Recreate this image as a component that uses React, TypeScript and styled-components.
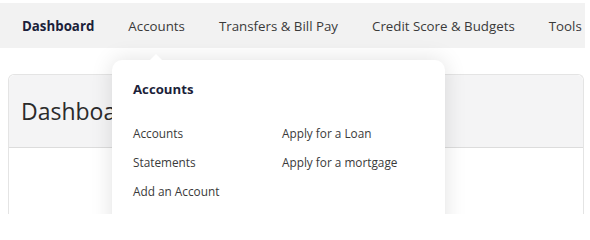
import styled, { createGlobalStyle } from 'styled-components';

const GlobalStyle = createGlobalStyle`
  body {
    margin: 0;
    background: #ffffff;
    font-family: "Open Sans", "Noto Sans", sans-serif;
    color: #333333;
  }
`;

const Page = styled.div`
  position: relative;
  width: 585px;
  height: 211px;
  padding-top: 3px;
  overflow: hidden;
`;

const NavBar = styled.nav`
  display: flex;
  align-items: center;
  height: 45px;
  padding-left: 22px;
  gap: 34px;
  background: #f2f2f2;
`;

const NavItem = styled.a<{ $active?: boolean }>`
  font-size: 13.3px;
  font-weight: ${({ $active }) => ($active ? 700 : 400)};
  color: ${({ $active }) => ($active ? '#1c1f3a' : '#3a3a3a')};
  text-decoration: none;
  white-space: nowrap;
`;

const Card = styled.section`
  margin: 26px 1px 0 8px;
  border: 1px solid #e4e4e4;
  border-bottom: none;
  border-radius: 6px 6px 0 0;
  height: 140px;
`;

const CardHeader = styled.header`
  display: flex;
  align-items: center;
  height: 72px;
  padding-left: 12px;
  background: #f4f4f5;
  border-bottom: 1px solid #dcdcdc;
  border-radius: 6px 6px 0 0;
`;

const Heading = styled.h1`
  margin: 0;
  font-size: 23px;
  font-weight: 400;
  color: #2b2b2b;
`;

const Dropdown = styled.div`
  position: absolute;
  left: 112px;
  top: 60px;
  width: 333px;
  height: 180px;
  padding: 20px 21px;
  box-sizing: border-box;
  background: #ffffff;
  border-radius: 10px 10px 0 0;
  box-shadow: 0 0 22px rgba(0, 0, 0, 0.12);

  &::before {
    content: '';
    position: absolute;
    left: 37px;
    top: -6px;
    border-left: 7px solid transparent;
    border-right: 7px solid transparent;
    border-bottom: 7px solid #ffffff;
  }
`;

const MenuTitle = styled.h2`
  margin: 0 0 26px;
  font-size: 13.2px;
  font-weight: 700;
  color: #1c1f3a;
`;

const MenuGrid = styled.div`
  display: grid;
  grid-template-columns: 149px 1fr;
  row-gap: 11px;
`;

const MenuLink = styled.a`
  font-size: 11.8px;
  line-height: 18px;
  color: #3a3a3a;
  text-decoration: none;
`;

export default function App() {
  return (
    <>
      <GlobalStyle />
      <Page>
        <NavBar>
          <NavItem $active>Dashboard</NavItem>
          <NavItem>Accounts</NavItem>
          <NavItem>Transfers &amp; Bill Pay</NavItem>
          <NavItem>Credit Score &amp; Budgets</NavItem>
          <NavItem>Tools</NavItem>
        </NavBar>
        <Card>
          <CardHeader>
            <Heading>Dashboard</Heading>
          </CardHeader>
        </Card>
        <Dropdown>
          <MenuTitle>Accounts</MenuTitle>
          <MenuGrid>
            <MenuLink>Accounts</MenuLink>
            <MenuLink>Apply for a Loan</MenuLink>
            <MenuLink>Statements</MenuLink>
            <MenuLink>Apply for a mortgage</MenuLink>
            <MenuLink>Add an Account</MenuLink>
          </MenuGrid>
        </Dropdown>
      </Page>
    </>
  );
}
